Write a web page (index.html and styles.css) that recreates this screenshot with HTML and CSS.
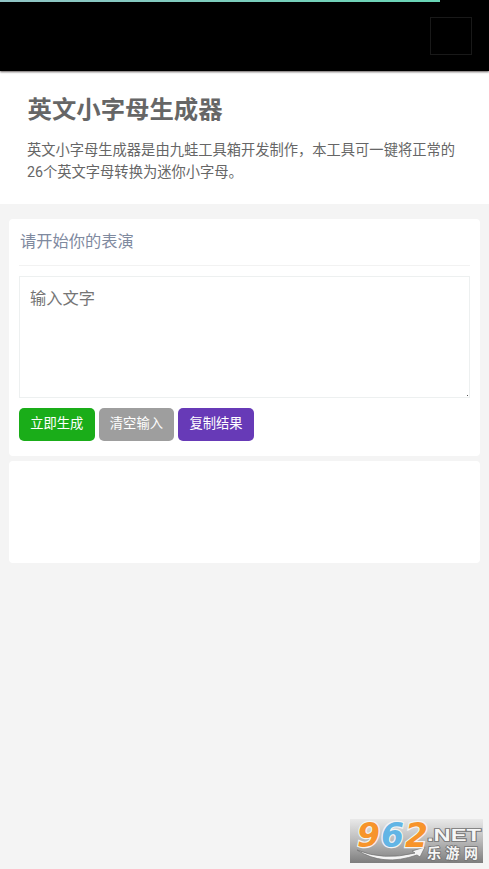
FILE: index.html
```html
<!DOCTYPE html>
<html lang="zh-CN">
<head>
<meta charset="utf-8">
<title>英文小字母生成器</title>
<link rel="stylesheet" href="styles.css">
</head>
<body>
<div class="progress"></div>
<header class="navbar"><button class="menu" aria-label="菜单"></button></header>
<section class="intro">
  <h1>英文小字母生成器</h1>
  <p>英文小字母生成器是由九蛙工具箱开发制作，本工具可一键将正常的<br>26个英文字母转换为迷你小字母。</p>
</section>
<main class="content">
  <section class="card tool">
    <h2>请开始你的表演</h2>
    <div class="field"><textarea placeholder="输入文字"></textarea><i class="grip"></i></div>
    <div class="actions">
      <button class="btn green">立即生成</button>
      <button class="btn gray">清空输入</button>
      <button class="btn purple">复制结果</button>
    </div>
  </section>
  <section class="card result"></section>
</main>
<svg class="watermark" viewBox="0 0 133 44" role="img">
  <defs>
    <linearGradient id="bg" x2="0" y2="1"><stop offset="0" stop-color="#e9e9e9"/><stop offset=".5" stop-color="#b9b9b9"/><stop offset="1" stop-color="#7d7d7d"/></linearGradient>
  </defs>
  <rect width="133" height="44" fill="url(#bg)"/>
  <path d="M7 31Q33 42 65 34L62 32L75 28L70 38L67 36Q33 48 7 31Z" fill="#f4f4f4" stroke="#777" stroke-width=".8"/>
  <text class="digits" x="7" y="28" textLength="71"><tspan class="orange">9</tspan><tspan class="blue">6</tspan><tspan class="orange">2</tspan></text>
  <text class="net" x="77" y="21.5" textLength="54" lengthAdjust="spacingAndGlyphs">.NET</text>
  <text class="brand" x="77" y="39" textLength="51">乐游网</text>
</svg>
</body>
</html>
```

FILE: styles.css
```css
* { box-sizing: border-box; }
body {
  margin: 0;
  min-height: 869px;
  background: #f4f4f4;
  color: #666;
  font-family: Roboto, "Noto Sans CJK SC", sans-serif;
  overflow: hidden;
}
h1, h2, p { margin: 0; }
button, textarea { font-family: inherit; }
.progress {
  position: absolute;
  z-index: 3;
  top: 0;
  left: 0;
  width: 440px;
  height: 2px;
  background: linear-gradient(90deg, #91c4c5, #68d5b5);
}
.navbar {
  position: relative;
  display: flex;
  justify-content: flex-end;
  align-items: center;
  height: 71px;
  padding: 1px 17px 0 0;
  background: #000;
  box-shadow: 0 1px 2px #655f5f;
}
.menu {
  width: 42px;
  height: 38px;
  padding: 0;
  border: 1px solid #191919;
  background: transparent;
}
.intro {
  height: 133px;
  padding: 21px 27px 0;
  background: #fff;
}
.intro h1 {
  padding-left: .5px;
  font-size: 24.4px;
  line-height: 36px;
  font-weight: 700;
}
.intro p {
  margin-top: 11px;
  font-size: 14.27px;
  line-height: 22.4px;
  white-space: nowrap;
}
.content {
  display: flex;
  flex-direction: column;
  gap: 5px;
  padding: 15px 9px 0;
}
.card {
  border-radius: 4px;
  background: #fff;
}
.tool {
  height: 237px;
  padding: 0 10px;
}
.tool h2 {
  height: 47px;
  padding-left: 1px;
  border-bottom: 1px solid #f2f2f2;
  color: #7f8a9f;
  font-size: 16.25px;
  line-height: 45px;
  font-weight: 400;
}
.field {
  position: relative;
  height: 122px;
  margin-top: 10px;
}
textarea {
  display: block;
  width: 100%;
  height: 100%;
  padding: 10px;
  border: 1px solid #edf0f0;
  background: #fff;
  font-size: 16.25px;
  line-height: 24px;
  resize: none;
}
textarea::placeholder { color: #757575; }
.grip {
  position: absolute;
  right: 2px;
  bottom: 2px;
  width: 1px;
  height: 1px;
  background: #555;
}
.actions {
  display: flex;
  gap: 4px;
  margin-top: 10px;
}
.btn {
  width: 75.6px;
  height: 33px;
  padding: 0 0 4px;
  border: 0;
  border-radius: 5px;
  color: #fff;
  font-size: 13.3px;
}
.green { background: #1aad19; }
.gray { background: #9e9e9e; }
.purple { background: #673ab7; }
.result { height: 102px; }
.watermark {
  position: absolute;
  left: 350px;
  top: 819px;
  width: 133px;
  height: 44px;
}
.watermark text {
  fill: #f6f6f6;
  stroke: #737373;
  stroke-width: 1.6px;
  paint-order: stroke;
  font-weight: 700;
}
.watermark .digits {
  font: italic 700 33px "DejaVu Sans", sans-serif;
  stroke: #f4f4f4;
  stroke-width: 2.4px;
}
.orange { fill: #f7942b; }
.blue { fill: #62b5e5; }
.net { font-family: "Liberation Sans", sans-serif; font-size: 17px; }
.brand { font-family: "Noto Sans CJK SC", sans-serif; font-size: 14px; }
```
